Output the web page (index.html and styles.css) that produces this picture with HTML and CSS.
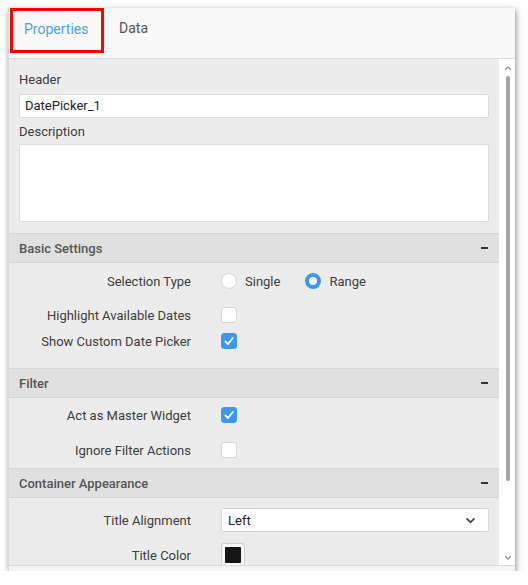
FILE: index.html
```html
<!DOCTYPE html>
<html>
<head>
<meta charset="utf-8">
<link rel="stylesheet" href="styles.css">
</head>
<body>
<div class="panel">
  <div class="tabs">
    <div class="tab active">Properties</div>
    <div class="tab">Data</div>
  </div>
  <div class="main">
    <div class="content">
      <div class="general">
        <div class="label">Header</div>
        <div class="input">DatePicker_1</div>
        <div class="label">Description</div>
        <div class="textarea"></div>
      </div>

      <div class="sec-head"><span>Basic Settings</span><i class="minus"></i></div>
      <div class="sec basic">
        <div class="row">
          <div class="rl">Selection Type</div>
          <div class="rc">
            <span class="opt"><span class="radio"></span>Single</span>
            <span class="opt"><span class="radio on"></span>Range</span>
          </div>
        </div>
        <div class="row gap8">
          <div class="rl">Highlight Available Dates</div>
          <div class="rc"><span class="cb"></span></div>
        </div>
        <div class="row">
          <div class="rl">Show Custom Date Picker</div>
          <div class="rc"><span class="cb on"><svg viewBox="0 0 16 16" width="16" height="16"><path d="M4.3 8.3 L7 11 L11.8 5" fill="none" stroke="#fff" stroke-width="1.8" stroke-linecap="round" stroke-linejoin="round"/></svg></span></div>
        </div>
      </div>

      <div class="sec-head"><span>Filter</span><i class="minus"></i></div>
      <div class="sec filter">
        <div class="row">
          <div class="rl">Act as Master Widget</div>
          <div class="rc"><span class="cb on"><svg viewBox="0 0 16 16" width="16" height="16"><path d="M4.3 8.3 L7 11 L11.8 5" fill="none" stroke="#fff" stroke-width="1.8" stroke-linecap="round" stroke-linejoin="round"/></svg></span></div>
        </div>
        <div class="row gap9">
          <div class="rl">Ignore Filter Actions</div>
          <div class="rc"><span class="cb"></span></div>
        </div>
      </div>

      <div class="sec-head"><span>Container Appearance</span><i class="minus"></i></div>
      <div class="sec container">
        <div class="row">
          <div class="rl">Title Alignment</div>
          <div class="rc">
            <div class="select"><span>Left</span>
              <svg viewBox="0 0 12 8" width="11" height="7"><path d="M1.5 1.5 L6 6 L10.5 1.5" fill="none" stroke="#444" stroke-width="2"/></svg>
            </div>
          </div>
        </div>
        <div class="row gap9">
          <div class="rl">Title Color</div>
          <div class="rc"><span class="swatch"><span class="swatch-in"></span></span></div>
        </div>
      </div>
    </div>
    <div class="scroll">
      <svg class="arr" viewBox="0 0 8 5" width="8" height="5"><path d="M1 4 L4 1 L7 4" fill="none" stroke="#999" stroke-width="1.3"/></svg>
      <div class="thumb"></div>
      <div class="spacer"></div>
      <svg class="arr" viewBox="0 0 8 5" width="8" height="5"><path d="M1 1 L4 4 L7 1" fill="none" stroke="#999" stroke-width="1.3"/></svg>
    </div>
  </div>
  <div class="footer"></div>
</div>
</body>
</html>
```

FILE: styles.css
```css
html, body {
  margin: 0;
  padding: 0;
  background: #ffffff;
}
body {
  font-family: Roboto, "Liberation Sans", Arial, sans-serif;
  font-size: 13px;
  color: #3c3c3c;
}
.panel {
  margin: 8px 0 0 8px;
  width: 507px;
  height: 563px;
  display: flex;
  flex-direction: column;
  background: #f5f5f5;
  box-shadow: 1px 2px 6px rgba(0,0,0,0.45);
  border-left: 1px solid #d9d9d9;
  box-sizing: border-box;
}
.tabs {
  height: 51px;
  flex: none;
  box-sizing: border-box;
  background: #f9f9f9;
  border-bottom: 1px solid #dcdcdc;
  display: flex;
  align-items: flex-start;
  padding-left: 1px;
}
.tab {
  font-size: 14px;
  color: #555;
  height: 45px;
  line-height: 41px;
  padding: 0 14px;
  box-sizing: border-box;
}
.tab.active {
  color: #47a5de;
  border: 3px solid #ff0000;
  width: 94px;
  line-height: 37px;
  padding: 0 0 0 11px;
  margin-right: 1px;
}
.main {
  flex: 1;
  display: flex;
  min-height: 0;
}
.content {
  flex: 1;
  background: #ececec;
  overflow: hidden;
}
.scroll {
  width: 16px;
  flex: none;
  background: #ffffff;
  display: flex;
  flex-direction: column;
  align-items: center;
  padding-top: 7px;
  padding-bottom: 5px;
  box-sizing: border-box;
}
.arr { display: block; flex: none; margin-left: 1px; }
.thumb {
  width: 4px;
  height: 405px;
  background: #a2a2a2;
  border-radius: 2px;
  margin-top: 5px;
  margin-left: 1px;
}
.spacer { flex: 1; }
.footer {
  height: 5px;
  flex: none;
  background: #f4f4f4;
  border-top: 1px solid #dadada;
}
.general {
  padding: 11px 10px 11px 10px;
}
.label {
  line-height: 20px;
  color: #3c3c3c;
}
.input {
  margin-top: 4px;
  height: 24px;
  box-sizing: border-box;
  background: #fff;
  border: 1px solid #dcdcdc;
  border-radius: 2px;
  padding-left: 5px;
  line-height: 22px;
  margin-bottom: 4px;
  color: #222;
}
.textarea {
  margin-top: 2px;
  height: 78px;
  box-sizing: border-box;
  background: #fff;
  border: 1px solid #dcdcdc;
  border-radius: 2px;
}
.sec-head {
  height: 30px;
  box-sizing: border-box;
  background: #e0e0e0;
  border-top: 1px solid #d6d6d6;
  border-bottom: 1px solid #d6d6d6;
  display: flex;
  align-items: center;
  justify-content: space-between;
  padding: 0 11px 0 10px;
  font-weight: 500;
  color: #555;
}
.minus {
  display: block;
  width: 7px;
  height: 2px;
  background: #333;
}
.sec.basic { padding: 5px 0 14px; }
.sec.filter { padding: 4px 0 5px; }
.sec.container { padding: 9px 0 0; }
.row {
  display: grid;
  grid-template-columns: 182px 1fr;
  column-gap: 30px;
  height: 26px;
  align-items: center;
  padding-right: 10px;
}
.row.gap8 { margin-top: 8px; }
.row.gap9 { margin-top: 9px; }
.rl {
  text-align: right;
  color: #3c3c3c;
}
.rc {
  display: flex;
  align-items: center;
}
.opt {
  display: inline-flex;
  align-items: center;
  margin-right: 25px;
  color: #3c3c3c;
}
.radio {
  width: 16px;
  height: 16px;
  box-sizing: border-box;
  border-radius: 50%;
  background: #fff;
  border: 1px solid #dadada;
  margin-right: 8px;
}
.radio.on {
  border: 4px solid #3b97f2;
}
.cb {
  width: 16px;
  height: 16px;
  box-sizing: border-box;
  border-radius: 3px;
  background: #fff;
  border: 1px solid #d6d6d6;
  display: flex;
}
.cb.on {
  background: #3b97f2;
  border-color: #3b97f2;
}
.cb.on svg { margin: -1px; }
.select {
  flex: 1;
  height: 24px;
  box-sizing: border-box;
  background: #fff;
  border: 1px solid #d8d8d8;
  border-radius: 2px;
  display: flex;
  align-items: center;
  justify-content: space-between;
  padding: 0 12px 0 6px;
  color: #222;
}
.swatch {
  width: 24px;
  height: 24px;
  box-sizing: border-box;
  border: 1px solid #cfcfcf;
  border-radius: 3px;
  background: #f7f7f7;
  display: flex;
  align-items: center;
  justify-content: center;
}
.swatch-in {
  width: 16px;
  height: 16px;
  background: #151515;
  border-radius: 1px;
}
```
